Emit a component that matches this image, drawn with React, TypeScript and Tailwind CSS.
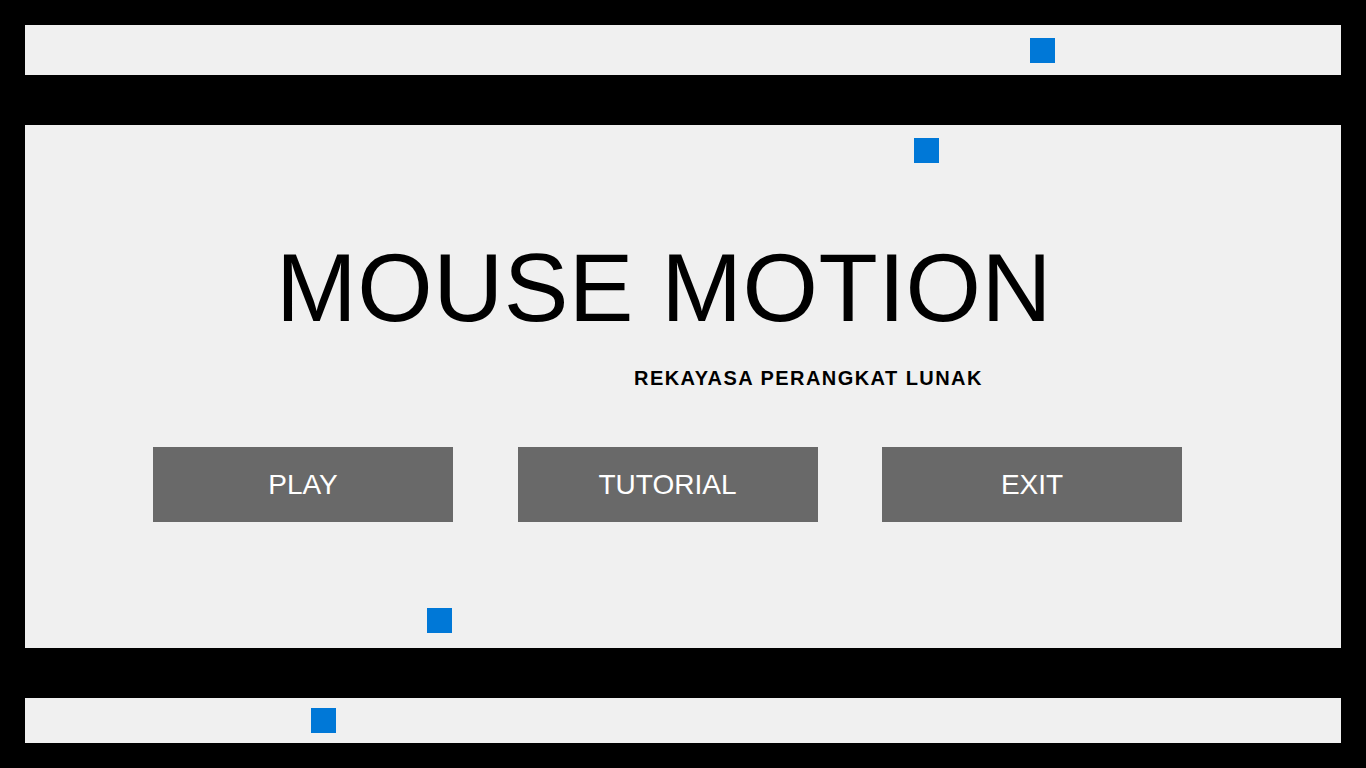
const squareClass = 'w-[25px] h-[25px] bg-[#0078d7]';

function MenuButton({ label }: { label: string }) {
  return (
    <button className="w-[300px] h-[75px] bg-[#696969] text-white text-[28px] leading-none flex items-center justify-center">
      {label}
    </button>
  );
}

export default function App() {
  return (
    <div
      className="w-[1366px] h-[768px] bg-black px-[25px] pt-[25px] flex flex-col overflow-hidden"
      style={{ fontFamily: '"Liberation Sans", Arial, sans-serif' }}
    >
      {/* top strip */}
      <div className="h-[50px] bg-[#f0f0f0] pt-[13px] pl-[1005px]">
        <div className={squareClass} />
      </div>

      {/* main panel */}
      <div className="mt-[50px] h-[523px] bg-[#f0f0f0] flex flex-col">
        <div className="pt-[13px] pl-[889px]">
          <div className={squareClass} />
        </div>
        <h1 className="mt-[76px] pl-[251px] text-[97px] leading-none font-normal tracking-[0.45px] text-black whitespace-nowrap">
          MOUSE MOTION
        </h1>
        <p className="mt-[32px] pl-[609px] text-[20px] leading-none font-bold tracking-[1.45px] text-black whitespace-nowrap">
          REKAYASA PERANGKAT LUNAK
        </p>
        <div className="mt-[59px] pl-[128px] flex gap-[64.5px]">
          <MenuButton label="PLAY" />
          <MenuButton label="TUTORIAL" />
          <MenuButton label="EXIT" />
        </div>
        <div className="mt-auto mb-[15px] pl-[402px]">
          <div className={squareClass} />
        </div>
      </div>

      {/* bottom strip */}
      <div className="mt-[50px] h-[45px] bg-[#f0f0f0] pt-[10px] pl-[286px]">
        <div className={squareClass} />
      </div>
    </div>
  );
}
